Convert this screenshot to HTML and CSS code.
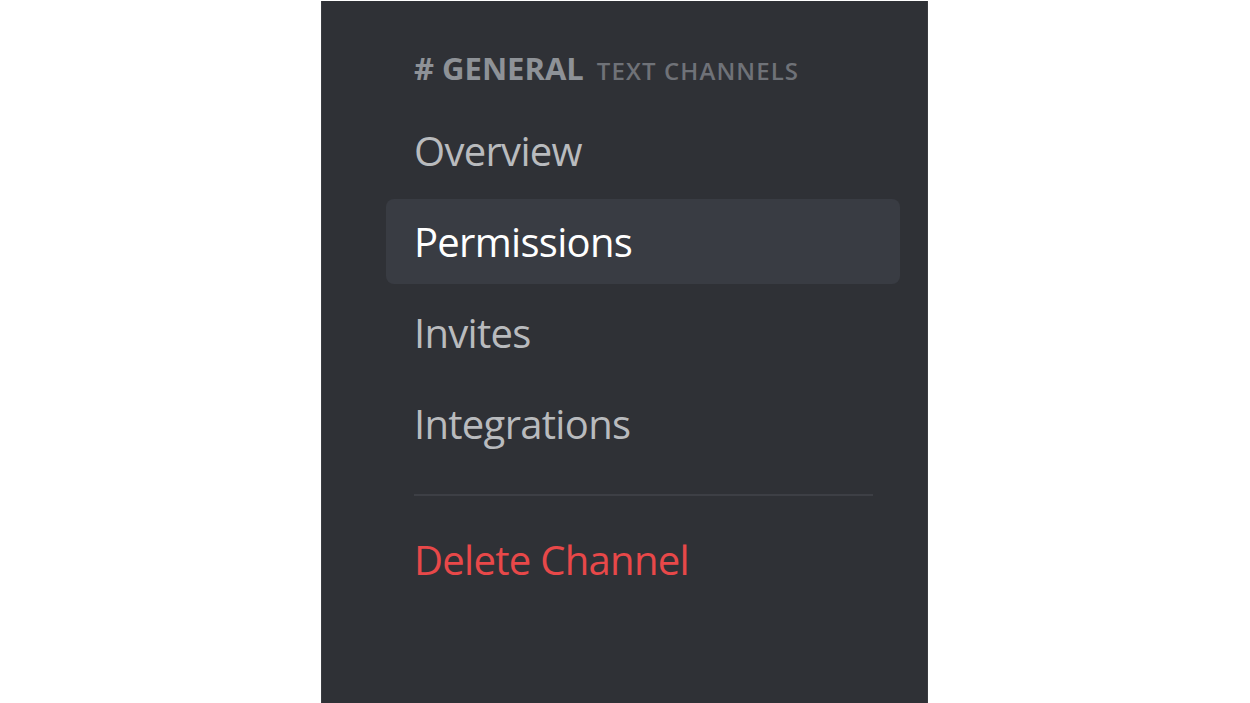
FILE: index.html
```html
<!DOCTYPE html>
<html lang="en">
<head>
<meta charset="utf-8">
<title>Channel Settings</title>
<link rel="stylesheet" href="styles.css">
</head>
<body>
<div class="page">
  <nav class="sidebar">
    <div class="header">
      <span class="channel"># GENERAL</span>
      <span class="category">TEXT CHANNELS</span>
    </div>
    <div class="item">Overview</div>
    <div class="item selected">Permissions</div>
    <div class="item">Invites</div>
    <div class="item">Integrations</div>
    <div class="separator"></div>
    <div class="item danger">Delete Channel</div>
  </nav>
</div>
</body>
</html>
```

FILE: styles.css
```css
html, body {
  margin: 0;
  padding: 0;
  background: #ffffff;
  height: 100%;
}
.page {
  display: flex;
  height: 703px;
  padding-left: 321px;
  box-sizing: border-box;
}
.sidebar {
  width: 607px;
  height: 702px;
  margin-top: 1px;
  background: #2f3136;
  border-left: 1px solid #3a3c41;
  border-right: 1px solid #3a3c41;
  box-sizing: border-box;
  padding: 46px 27px 0 64px;
  font-family: "Open Sans", "Noto Sans", sans-serif;
  display: flex;
  flex-direction: column;
}
.header {
  display: flex;
  align-items: baseline;
  gap: 13px;
  padding-left: 28px;
  height: 61px;
}
.channel {
  font-size: 31px;
  font-weight: 700;
  color: #8e9297;
  letter-spacing: 0;
}
.category {
  font-size: 24px;
  font-weight: 600;
  color: #6f7278;
  letter-spacing: 1.1px;
}
.item {
  height: 85px;
  margin-bottom: 6px;
  display: flex;
  align-items: center;
  padding-left: 28px;
  border-radius: 8px;
  font-size: 40px;
  font-weight: 500;
  color: #b9bbbe;
  letter-spacing: -0.7px;
}
.item.selected {
  background: #393c43;
  color: #ffffff;
}
.separator {
  height: 2px;
  background: #3d3f45;
  margin: 22px 27px 21px 28px;
}
.item.danger {
  color: #e84849;
}
```
